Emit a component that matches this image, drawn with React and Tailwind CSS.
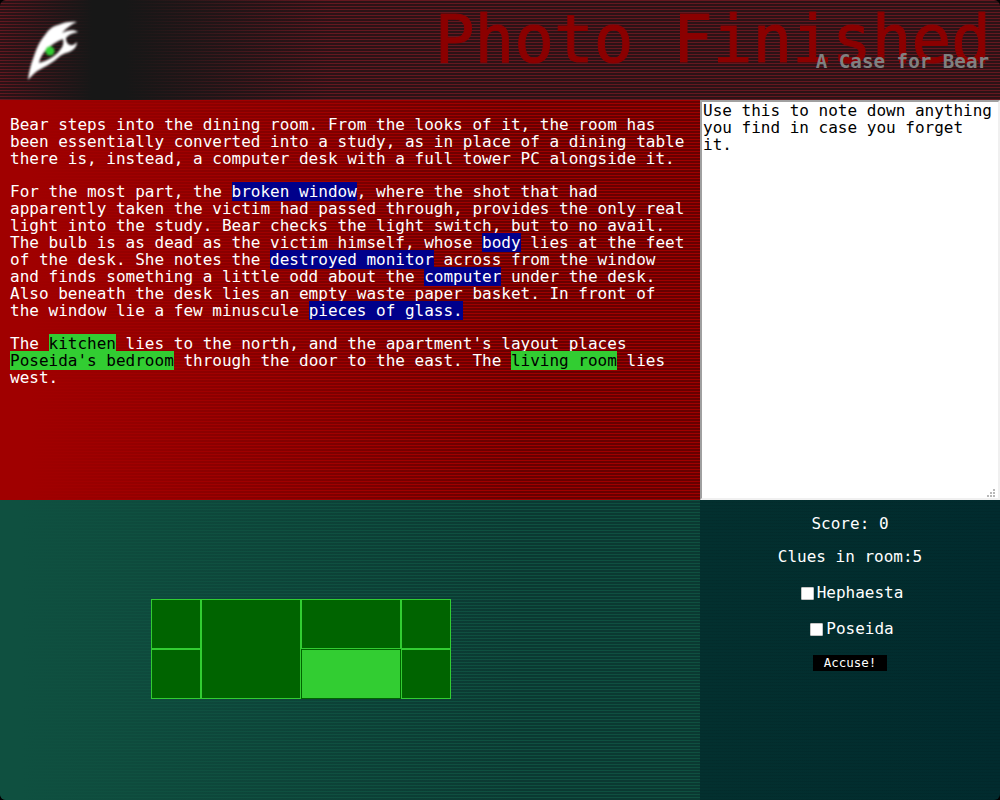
const mono = 'font-["DejaVu_Sans_Mono",monospace]';

function Logo() {
    return (
        <svg width="56" height="64" viewBox="25 20 56 64" className="blur-[0.8px]">
            <path
                d="M28 80 C29 72 31 64 33 59 C36 50 39 42 45 35 C49 29 53 26 58 25 C64 22 71 21 77 22 C72 24 66 28 62 33 C67 30 74 29 78 32 C73 33 68 35 66 38 C66 42 68 46 73 45 C75 44 76 43 77 42 C77 47 73 51 66 53 C60 55 58 58 54 61 C47 66 40 69 36 72 C32 75 30 78 28 80 Z M39 63 C41 53 50 44 63 39 C64 43 63 47 60 50 C56 56 47 61 39 63 Z"
                fill="#ffffff"
                fillRule="evenodd"
            />
            <circle cx="50" cy="51" r="4.5" fill="#32cd32" />
        </svg>
    );
}

function Grip() {
    return (
        <svg width="9" height="9" viewBox="0 0 9 9" className="absolute right-[4px] bottom-[2px]">
            <path d="M6 0h2v2h-2z M3 3h2v2h-2z M6 3h2v2h-2z M0 6h2v2h-2z M3 6h2v2h-2z M6 6h2v2h-2z" fill="#b8b8b8" />
        </svg>
    );
}

function Clue({ children }) {
    return <span className="bg-[#00008b]">{children}</span>;
}

function Exit({ children }) {
    return <span className="bg-[#32cd32] text-black">{children}</span>;
}

function Room({ className }) {
    return <div className={`border border-[#32cd32] bg-[#006400] ${className}`} />;
}

function Suspect({ name }) {
    return (
        <label className="mt-[18px] ml-[4px] flex items-center">
            <span className="mr-[3px] block h-[13px] w-[13px] rounded-[1px] bg-white border border-[#c4c4c4]" />
            {name}
        </label>
    );
}

export default function App() {
    return (
        <div className="w-[1000px] h-[800px] bg-black">
            <div className={`w-[1000px] h-[800px] overflow-hidden rounded-[6px] ${mono}`}>
                <header className="relative h-[100px] bg-[linear-gradient(to_right,transparent_0px,#171717_92px,#171717_125px,transparent_330px),repeating-linear-gradient(to_bottom,#641820_0px,#641820_1px,#2c1216_1px,#2c1216_3px)]">
                    <div className="absolute left-[25px] top-[20px]">
                        <Logo />
                    </div>
                    <h1 className="absolute right-[9px] top-[2px] text-[66px] leading-[76px] font-normal text-[#8b0000] [-webkit-text-stroke:1px_#8b0000] whitespace-nowrap">Photo Finished</h1>
                    <p className="absolute right-[11px] top-[50px] text-[19.2px] leading-[23px] font-bold text-[#808080] whitespace-nowrap">A Case for Bear</p>
                </header>
                <div className="flex h-[400px]">
                    <main className="w-[700px] px-[10px] pt-[16px] text-[16px] leading-[17px] text-white bg-[linear-gradient(to_right,#a00000_30px,transparent_520px),repeating-linear-gradient(to_bottom,#a00000_0px,#a00000_1px,#680000_1px,#680000_3px)]">
                        <p>
                            Bear steps into the dining room. From the looks of it, the room has been essentially converted into a study, as in place of a dining table there is, instead, a computer desk with a full tower PC alongside it.
                        </p>
                        <p className="mt-[16px]">
                            For the most part, the <Clue>broken window</Clue>, where the shot that had apparently taken the victim had passed through, provides the only real light into the study. Bear checks the light switch, but to no avail. The bulb is as dead as the victim himself, whose <Clue>body</Clue> lies at the feet of the desk. She notes the <Clue>destroyed monitor</Clue> across from the window and finds something a little odd about the <Clue>computer</Clue> under the desk. Also beneath the desk lies an empty waste paper basket. In front of the window lie a few minuscule <Clue>pieces of glass.</Clue>
                        </p>
                        <p className="mt-[16px]">
                            The <Exit>kitchen</Exit> lies to the north, and the apartment's layout places <Exit>Poseida's bedroom</Exit> through the door to the east. The <Exit>living room</Exit> lies west.
                        </p>
                    </main>
                    <div className="relative w-[300px] h-[400px]">
                        <textarea
                            className={`w-[300px] h-[400px] block bg-white text-black text-[16px] leading-[17px] px-[1px] pt-0 border-2 border-t-[#a0a0a0] border-l-[#a0a0a0] border-r-[#f0f0f0] border-b-[#f0f0f0] outline-none resize-none ${mono}`}
                            defaultValue="Use this to note down anything you find in case you forget it."
                        />
                        <Grip />
                    </div>
                </div>
                <div className="flex h-[300px]">
                    <section className="w-[700px] flex items-center justify-center pl-[2px] pb-[2px] pr-[100px] bg-[linear-gradient(to_right,#0f5040_20px,transparent_520px),repeating-linear-gradient(to_bottom,#0f5040_0px,#0f5040_1px,#0b3932_1px,#0b3932_3px)]">
                        <div className="grid grid-cols-[50px_100px_100px_50px] grid-rows-[50px_50px] w-[300px] h-[100px]">
                            <Room />
                            <Room className="row-span-2" />
                            <Room />
                            <Room />
                            <Room />
                            <div className="border border-[#006400] bg-[#32cd32]" />
                            <Room />
                        </div>
                    </section>
                    <aside className="w-[300px] flex flex-col items-center pt-[15px] text-[16px] leading-[18px] text-white bg-[repeating-linear-gradient(to_bottom,transparent_0px,transparent_2px,rgba(0,0,0,0.06)_2px,rgba(0,0,0,0.06)_3px),linear-gradient(to_right,#03302f,#012b2e)]">
                        <p>Score: 0</p>
                        <p className="mt-[15px]">Clues in room:5</p>
                        <Suspect name="Hephaesta" />
                        <Suspect name="Poseida" />
                        <button className="mt-[17px] h-[16px] w-[74px] bg-black text-white text-[12.5px] leading-[16px]">Accuse!</button>
                    </aside>
                </div>
            </div>
        </div>
    );
}
